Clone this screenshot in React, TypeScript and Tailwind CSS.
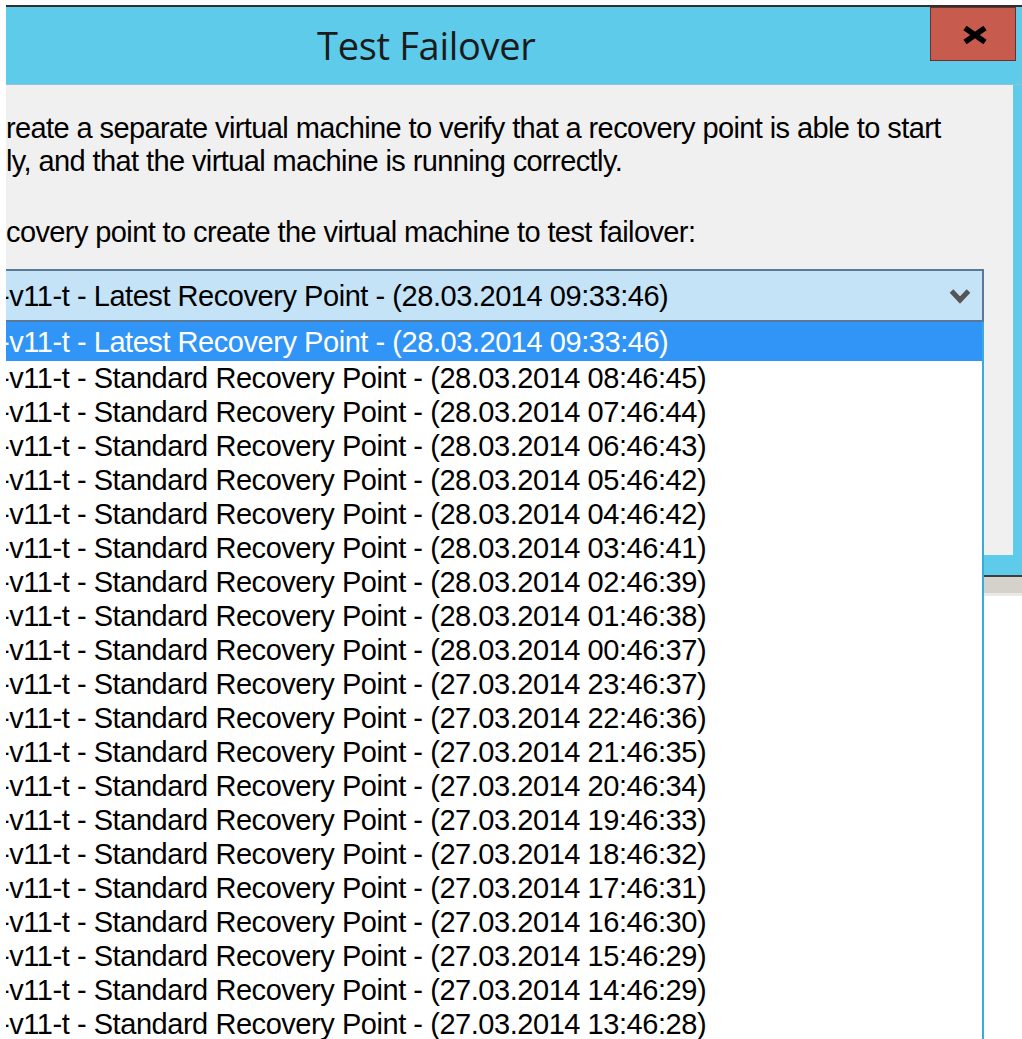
const POINTS = [
  "28.03.2014 08:46:45",
  "28.03.2014 07:46:44",
  "28.03.2014 06:46:43",
  "28.03.2014 05:46:42",
  "28.03.2014 04:46:42",
  "28.03.2014 03:46:41",
  "28.03.2014 02:46:39",
  "28.03.2014 01:46:38",
  "28.03.2014 00:46:37",
  "27.03.2014 23:46:37",
  "27.03.2014 22:46:36",
  "27.03.2014 21:46:35",
  "27.03.2014 20:46:34",
  "27.03.2014 19:46:33",
  "27.03.2014 18:46:32",
  "27.03.2014 17:46:31",
  "27.03.2014 16:46:30",
  "27.03.2014 15:46:29",
  "27.03.2014 14:46:29",
  "27.03.2014 13:46:28",
];

const LATEST = "-v11-t - Latest Recovery Point - (28.03.2014 09:33:46)";

const font = "font-['Liberation_Sans',Arial,sans-serif] text-[29px] whitespace-nowrap";
const body = `${font} tracking-[-0.6px]`;
const item = `${font} tracking-[-0.45px] -ml-[6px]`;

function CloseButton() {
  return (
    <button className="mr-[6px] flex h-[54px] w-[86px] items-center justify-center border border-[#6e2e27] bg-[#c75b4d]">
      <svg width="26" height="18" viewBox="0 0 26 18" className="ml-[3px] mt-[2px]">
        <path d="M3 2 L23 16 M23 2 L3 16" stroke="#000" strokeWidth="5.5" strokeLinecap="butt" />
      </svg>
    </button>
  );
}

function Chevron() {
  return (
    <svg width="22" height="16" viewBox="0 0 22 16" className="mr-[11px] shrink-0">
      <path d="M2.5 3 L11 12 L19.5 3" fill="none" stroke="#555" strokeWidth="5" />
    </svg>
  );
}

export default function App() {
  return (
    <div className="relative h-[1039px] w-[1022px] overflow-hidden bg-white text-black">
      <div className="h-[5px]" />
      <div className="ml-[6px] border-t-2 border-[#2f2f2f] bg-[#5ecbeb]">
        {/* caption */}
        <div className="flex h-[77px] items-start justify-between">
          <div className="self-center pl-[311px] pb-[2px] font-['Open_Sans','Noto_Sans',sans-serif] text-[38px] leading-none tracking-[-0.3px] text-[#1b1b1b]">
            Test Failover
          </div>
          <CloseButton />
        </div>
        <div className="h-px bg-[#8fc3d8]" />

        {/* client area */}
        <div className="flex">
          <div className="h-[470px] w-[1007px] overflow-hidden bg-[#f0f0f0] pt-[27px]">
            <div className={`${body} leading-[33px]`}>
              reate a separate virtual machine to verify that a recovery point is able to start
            </div>
            <div className={`${body} leading-[33px]`}>
              ly, and that the virtual machine is running correctly.
            </div>
            <div className={`${body} mt-[38px] leading-[33px]`}>
              covery point to create the virtual machine to test failover:
            </div>
            <div className="mt-[20px] flex h-[53px] w-[978px] items-center border-y-2 border-r-2 border-[#57799a] bg-[#c4e3f7]">
              <div className={`${item} flex-1 leading-[34px]`}>{LATEST}</div>
              <Chevron />
            </div>
          </div>
          <div className="flex-1" />
        </div>
        <div className="h-[20px]" />
        <div className="h-[2px] bg-[#3e3e3e]" />
        <div className="h-[16px] bg-[#d5d2cc]" />
        <div className="h-[3px] bg-[#ebe9e5]" />
      </div>

      {/* open drop-down list */}
      <div className="absolute left-[6px] top-[322px] h-[760px] w-[978px] overflow-hidden border-r-2 border-[#3aa9dc] bg-white">
        <div className="h-[39px] bg-[#3194f7] pt-[3px] text-white">
          <div className={`${item} leading-[34px]`}>{LATEST}</div>
        </div>
        {POINTS.map((p) => (
          <div key={p} className={`${item} h-[34px] leading-[34px]`}>
            -v11-t - Standard Recovery Point - ({p})
          </div>
        ))}
      </div>
    </div>
  );
}
